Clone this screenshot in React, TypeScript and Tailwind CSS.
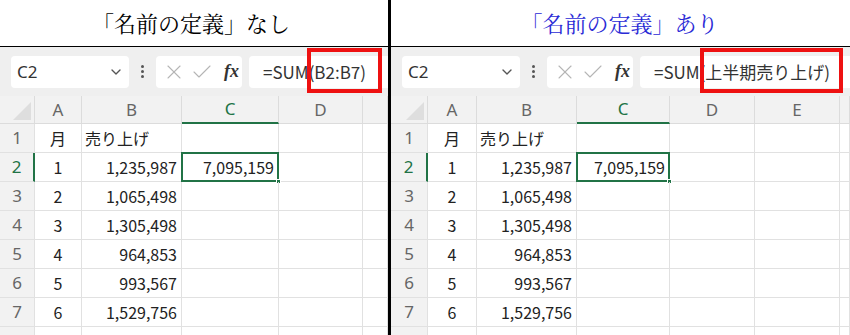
import { Check, ChevronDown, X } from "lucide-react";

type Panel = {
  title: string;
  titleClass: string;
  formula: string;
  cols: string[];
  gridClass: string;
  redBox: string;
};

const rows: [string, string, string][] = [
  ["月", "売り上げ", ""],
  ["1", "1,235,987", "7,095,159"],
  ["2", "1,065,498", ""],
  ["3", "1,305,498", ""],
  ["4", "964,853", ""],
  ["5", "993,567", ""],
  ["6", "1,529,756", ""],
  ["", "", ""],
];

const cellFont = { fontFamily: '"Noto Sans CJK JP", "Noto Sans", sans-serif' };

function FormulaBar({ formula, redBox }: { formula: string; redBox: string }) {
  return (
    <div className="relative flex h-[49px] shrink-0 items-center bg-[#efefef] pl-[11px]">
      <div className="flex h-[32px] w-[118px] items-center justify-between rounded-[4px] bg-white pl-[6px] pr-[5px] text-[17px] text-[#333]">
        <span style={{ fontFamily: '"Noto Sans", sans-serif' }}>C2</span>
        <ChevronDown size={16} strokeWidth={2} className="text-[#555]" />
      </div>
      <div className="flex w-[27px] flex-col items-center gap-[2px]">
        <span className="h-[3px] w-[3px] rounded-full bg-[#555]" />
        <span className="h-[3px] w-[3px] rounded-full bg-[#555]" />
        <span className="h-[3px] w-[3px] rounded-full bg-[#555]" />
      </div>
      <div className="flex h-[32px] w-[86px] items-center rounded-[4px] bg-white pl-[6px]">
        <X size={24} strokeWidth={1.1} className="text-[#b5b5b5]" />
        <Check size={24} strokeWidth={1.1} className="ml-[4px] text-[#b5b5b5]" />
        <span
          className="ml-[10px] text-[18px] font-bold italic text-[#333]"
          style={{ fontFamily: '"Liberation Serif", serif' }}
        >
          fx
        </span>
      </div>
      <div
        className="ml-[7px] flex h-[32px] flex-1 items-center overflow-hidden whitespace-nowrap rounded-l-[4px] bg-white pl-[14px] text-[17px] text-[#333]"
        style={cellFont}
      >
        {formula}
      </div>
      <div className={`absolute top-[1px] h-[45px] border-[4px] border-[#ee1111] ${redBox}`} />
    </div>
  );
}

function Grid({ cols, gridClass }: { cols: string[]; gridClass: string }) {
  const head = "flex items-center justify-center border-r border-b border-[#dcdcdc] bg-[#f2f2f2] text-[17px] text-[#666]";
  return (
    <div className={`grid shrink-0 ${gridClass}`} style={cellFont}>
      <div className="relative h-[28px] border-r border-b border-[#dcdcdc] bg-[#f2f2f2]">
        <svg className="absolute bottom-[3px] right-[3px]" width="18" height="18" viewBox="0 0 18 18">
          <polygon points="18,0 18,18 0,18" fill="#dedede" />
        </svg>
      </div>
      {cols.map((c) => (
        <div
          key={c}
          className={
            c === "C"
              ? `${head} border-b-2 border-b-[#217346] bg-[#e2e2e2] text-[#217346]`
              : head
          }
          style={{ fontFamily: '"Noto Sans", sans-serif' }}
        >
          {c}
        </div>
      ))}
      {rows.map((r, i) => (
        <Row key={i} n={i + 1} r={r} extra={cols.length - 3} />
      ))}
    </div>
  );
}

function Row({ n, r, extra }: { n: number; r: [string, string, string]; extra: number }) {
  const cell = "h-[29px] border-r border-b border-[#e1e1e1] text-[16px] text-[#222] flex items-center";
  const sel = n === 2;
  return (
    <>
      <div
        className={`${cell} justify-center bg-[#f2f2f2] text-[17px] ${
          sel ? "border-r-2 border-r-[#217346] bg-[#e2e2e2] text-[#217346]" : "text-[#666]"
        }`}
        style={{ fontFamily: '"Noto Sans", sans-serif' }}
      >
        {n}
      </div>
      <div className={`${cell} justify-center`}>{r[0]}</div>
      <div className={`${cell} ${n === 1 ? "justify-start pl-[3px]" : "justify-end pr-[4px]"}`}>{r[1]}</div>
      <div className={`${cell} relative justify-end pr-[4px]`}>
        {sel && (
          <>
            <div className="absolute -top-[1px] -left-[1px] -right-[1px] -bottom-[1px] border-2 border-[#217346]" />
            <div className="absolute -bottom-[3px] -right-[3px] h-[5px] w-[5px] border border-white bg-[#217346]" />
          </>
        )}
        <span className="relative">{r[2]}</span>
      </div>
      {Array.from({ length: extra }).map((_, k) => (
        <div key={k} className={cell} />
      ))}
    </>
  );
}

const panels: Panel[] = [
  {
    title: "「名前の定義」なし",
    titleClass: "text-black",
    formula: "=SUM(B2:B7)",
    cols: ["A", "B", "C", "D", ""],
    gridClass: "grid-cols-[35px_47px_100px_97px_84px_1fr]",
    redBox: "left-[307px] w-[75px]",
  },
  {
    title: "「名前の定義」あり",
    titleClass: "text-[#2a2ad6]",
    formula: "=SUM(上半期売り上げ)",
    cols: ["A", "B", "C", "D", "E", ""],
    gridClass: "grid-cols-[37px_49px_100px_93px_85px_85px_1fr]",
    redBox: "left-[309px] w-[143px]",
  },
];

export default function App() {
  return (
    <div className="flex h-[335px] w-[850px] overflow-hidden bg-white">
      {panels.map((p, i) => (
        <div key={i} className="contents">
          {i === 1 && <div className="w-[3px] shrink-0 bg-black" />}
          <div className={`flex flex-col overflow-hidden ${i === 0 ? "w-[388px]" : "flex-1"}`}>
            <div
              className={`flex h-[47px] shrink-0 items-center justify-center border-b-[1.5px] border-black pb-[2px] text-[22px] ${p.titleClass}`}
              style={{ fontFamily: '"Noto Serif CJK JP", "Noto Sans CJK JP", serif' }}
            >
              <span className={i === 0 ? "-ml-[6px]" : "-ml-[2px]"}>{p.title}</span>
            </div>
            <FormulaBar formula={p.formula} redBox={p.redBox} />
            <Grid cols={p.cols} gridClass={p.gridClass} />
          </div>
        </div>
      ))}
    </div>
  );
}
